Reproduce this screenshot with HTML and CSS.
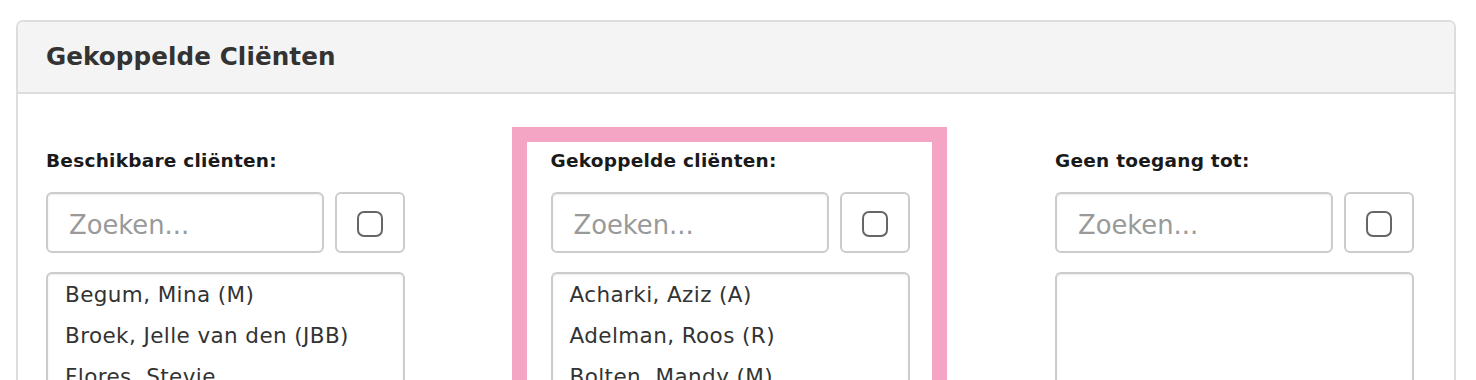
FILE: index.html
```html
<!DOCTYPE html>
<html lang="nl">
<head>
<meta charset="utf-8">
<title>Gekoppelde Cliënten</title>
<link rel="stylesheet" href="styles.css">
</head>
<body>
<div class="panel">
  <div class="panel-heading">Gekoppelde Cliënten</div>
  <div class="panel-body">
    <div class="col">
      <div class="col-label">Beschikbare cliënten:</div>
      <div class="search-row">
        <input class="search" type="text" placeholder="Zoeken...">
        <button class="check-btn" type="button"><svg width="26" height="26" viewBox="0 0 26 26"><rect x="1" y="1" width="24" height="24" rx="6" ry="6" fill="none" stroke="#666" stroke-width="2"/></svg></button>
      </div>
      <div class="list">
        <div class="item">Begum, Mina (M)</div>
        <div class="item">Broek, Jelle van den (JBB)</div>
        <div class="item">Flores, Stevie</div>
      </div>
    </div>
    <div class="col col-highlight">
      <div class="col-label">Gekoppelde cliënten:</div>
      <div class="search-row">
        <input class="search" type="text" placeholder="Zoeken...">
        <button class="check-btn" type="button"><svg width="26" height="26" viewBox="0 0 26 26"><rect x="1" y="1" width="24" height="24" rx="6" ry="6" fill="none" stroke="#666" stroke-width="2"/></svg></button>
      </div>
      <div class="list">
        <div class="item">Acharki, Aziz (A)</div>
        <div class="item">Adelman, Roos (R)</div>
        <div class="item">Bolten, Mandy (M)</div>
      </div>
    </div>
    <div class="col">
      <div class="col-label">Geen toegang tot:</div>
      <div class="search-row">
        <input class="search" type="text" placeholder="Zoeken...">
        <button class="check-btn" type="button"><svg width="26" height="26" viewBox="0 0 26 26"><rect x="1" y="1" width="24" height="24" rx="6" ry="6" fill="none" stroke="#666" stroke-width="2"/></svg></button>
      </div>
      <div class="list"></div>
    </div>
  </div>
</div>
</body>
</html>
```
FILE: styles.css
```css
* { box-sizing: border-box; }
html, body {
  margin: 0;
  padding: 0;
  background: #fff;
  font-family: "DejaVu Sans", Verdana, sans-serif;
  color: #333;
}
.panel {
  margin: 20px 0 0 16px;
  width: 1440px;
  border: 2px solid #ddd;
  border-radius: 7px;
  overflow: hidden;
}
.panel-heading {
  background: #f4f4f4;
  border-bottom: 2px solid #ddd;
  padding: 20px 28px 20px;
  font-size: 24.6px;
  line-height: 30px;
  font-weight: bold;
  letter-spacing: 0.1px;
  color: #333;
}
.panel-body {
  display: flex;
  align-items: flex-start;
  gap: 145.5px;
  padding: 56px 28px 40px;
}
.col {
  width: 359px;
  flex: 0 0 359px;
}
.col-highlight {
  flex: 0 0 auto;
  width: auto;
  margin: -23px -37px 0 -39px;
  border: 15px solid #f4a5c3;
  padding: 8px 22px 0 24px;
}
.col-highlight > * { width: 359px; }
.col-label {
  font-size: 18.5px;
  line-height: 22px;
  font-weight: bold;
  letter-spacing: 0.25px;
  color: #1a1a1a;
  margin-bottom: 20px;
}
.search-row {
  display: flex;
  gap: 11px;
}
.search {
  flex: 1 1 auto;
  width: 278px;
  height: 61px;
  border: 2px solid #ccc;
  border-radius: 6px;
  box-shadow: inset 0 1px 2px rgba(0,0,0,0.08);
  padding: 5px 21px 0;
  font-family: "DejaVu Sans", Verdana, sans-serif;
  font-size: 25.8px;
  color: #333;
  background: #fff;
  outline: none;
}
.search::placeholder { color: #999; }
.check-btn {
  flex: 0 0 70px;
  width: 70px;
  height: 61px;
  border: 2px solid #ccc;
  border-radius: 6px;
  background: #fff;
  padding: 2px 0 0;
  display: flex;
  align-items: center;
  justify-content: center;
}
.check-btn svg { display: block; }
.list {
  margin-top: 19px;
  height: 240px;
  border: 2px solid #ccc;
  border-radius: 6px;
  box-shadow: inset 0 1px 2px rgba(0,0,0,0.08);
  overflow: hidden;
}
.item {
  font-size: 21.5px;
  line-height: 41px;
  padding-left: 17px;
  letter-spacing: 0.4px;
  color: #333;
  white-space: nowrap;
}
```
